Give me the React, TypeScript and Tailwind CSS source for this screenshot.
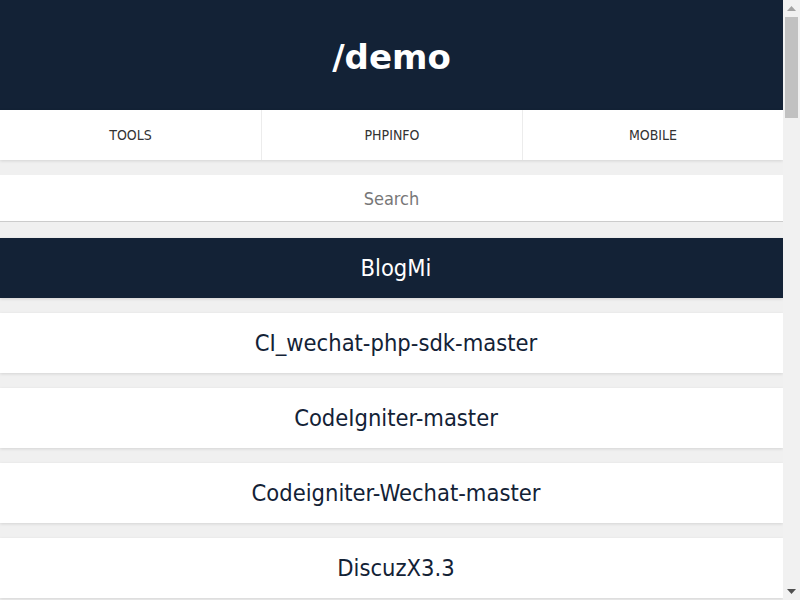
import React from "react";

const items = [
  "BlogMi",
  "CI_wechat-php-sdk-master",
  "CodeIgniter-master",
  "Codeigniter-Wechat-master",
  "DiscuzX3.3",
  "ThinkPHP",
  "laravel",
  "wordpress",
];

const navLinks = ["TOOLS", "PHPINFO", "MOBILE"];

// classic windows-style scrollbar, the page is taller than the window
function Scrollbar() {
  return (
    <div className="w-[17px] shrink-0 bg-[#f1f1f1] flex flex-col items-center">
      <div className="h-[17px] flex items-center justify-center">
        <svg width="9" height="5" viewBox="0 0 9 5">
          <path d="M0 5 L4.5 0 L9 5 Z" fill="#a3a3a3" />
        </svg>
      </div>
      <div className="w-[13px] h-[101px] bg-[#c1c1c1]" />
      <div className="flex-1" />
      <div className="h-[17px] flex items-center justify-center">
        <svg width="9" height="5" viewBox="0 0 9 5">
          <path d="M0 0 L9 0 L4.5 5 Z" fill="#505050" />
        </svg>
      </div>
    </div>
  );
}

export default function App() {
  return (
    <div className="h-screen flex bg-[#f0f0f0] text-[#333] font-['DejaVu_Sans_Condensed','DejaVu_Sans',sans-serif]">
      <div className="flex-1 min-w-0 overflow-hidden">
        {/* header */}
        <header className="h-[110px] bg-[#132236] flex items-center justify-center">
          <h1 className="text-[34px] font-bold text-white font-['DejaVu_Sans',sans-serif] pt-1">
            /demo
          </h1>
        </header>

        {/* nav */}
        <nav className="grid grid-cols-3 h-[50px] bg-white shadow-[0_1px_3px_rgba(0,0,0,0.12)]">
          {navLinks.map((link, i) => (
            <a
              key={link}
              href="#"
              className={
                "flex items-center justify-center text-[14px] text-[#333]" +
                (i > 0 ? " border-l border-[#ececec]" : "")
              }
            >
              {link}
            </a>
          ))}
        </nav>

        {/* search */}
        <div className="mt-[15px] bg-white border-b border-[#cccccc]">
          <input
            type="text"
            placeholder="Search"
            className="w-full h-[46px] text-center text-[18px] outline-none placeholder:text-[#777] bg-transparent"
          />
        </div>

        {/* list */}
        <ul className="mt-[16px] flex flex-col gap-[15px] pb-[15px]">
          {items.map((name, i) => (
            <li key={name}>
              <a
                href="#"
                className={
                  "flex items-center justify-center h-[60px] pl-[9px] pt-px text-[23.5px] shadow-[0_1px_3px_rgba(0,0,0,0.12)] " +
                  (i === 0 ? "bg-[#132236] text-white" : "bg-white text-[#132236]")
                }
              >
                {name}
              </a>
            </li>
          ))}
        </ul>
      </div>
      <Scrollbar />
    </div>
  );
}
